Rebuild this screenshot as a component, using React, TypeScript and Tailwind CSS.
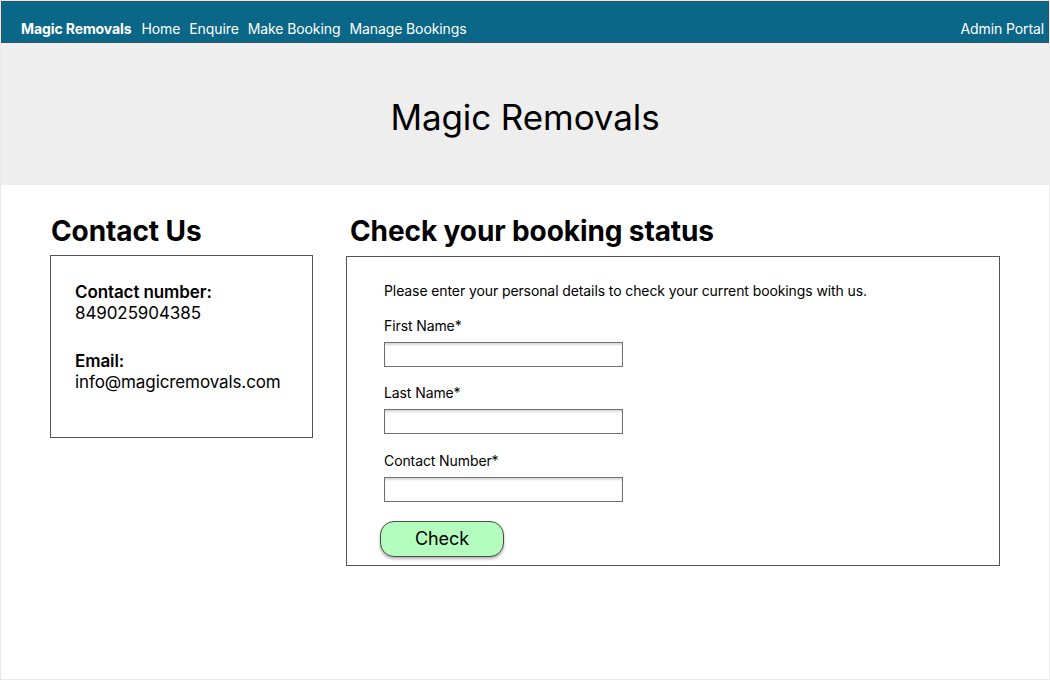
export default function App() {
  const navLinks = ["Home", "Enquire", "Make Booking", "Manage Bookings"];
  const fields = [
    { label: "First Name*", mt: "mt-[15px]" },
    { label: "Last Name*", mt: "mt-[16px]" },
    { label: "Contact Number*", mt: "mt-[17px]" },
  ];

  return (
    <div
      className="w-[1050px] h-[680px] overflow-hidden bg-white border border-[#e9e9e9] text-black tracking-[-0.1px]"
      style={{ fontFamily: "Inter, 'Noto Sans', sans-serif" }}
    >
      <nav className="h-[42px] bg-[#0a6787] border border-[#2f5566] flex items-end pb-[3px] pl-[19px] pr-[4px] text-white text-sm leading-5">
        <span className="font-bold">Magic Removals</span>
        <ul className="flex gap-[9px] ml-[10px]">
          {navLinks.map((l) => (
            <li key={l}>{l}</li>
          ))}
        </ul>
        <span className="ml-auto">Admin Portal</span>
      </nav>

      <header className="h-[142px] bg-[#eeeeee] flex items-center justify-center pt-[6px]">
        <h1 className="text-[35px] leading-[44px]">Magic Removals</h1>
      </header>

      <main className="flex items-start pt-[29px] pl-[49px]">
        <section className="w-[263px]">
          <h2 className="text-[28px] leading-[34px] font-bold pl-[1px] mb-[7px]">Contact Us</h2>
          <div className="h-[183px] border border-[#555] pl-[24px] pt-[26px] text-[17px] leading-[21px]">
            <p className="font-semibold">Contact number:</p>
            <p>849025904385</p>
            <p className="font-semibold mt-[27px]">Email:</p>
            <p>info@magicremovals.com</p>
          </div>
        </section>

        <section className="w-[654px] ml-[33px]">
          <h2 className="text-[28px] leading-[34px] font-bold pl-[4px] mb-[8px]">Check your booking status</h2>
          <form
            className="h-[310px] border border-[#555] pl-[37px] pt-[24px]"
            onSubmit={(e) => e.preventDefault()}
          >
            <p className="text-sm leading-5">
              Please enter your personal details to check your current bookings with us.
            </p>
            {fields.map((f) => (
              <div key={f.label} className={f.mt}>
                <label className="block text-sm leading-5">{f.label}</label>
                <input
                  type="text"
                  className="block mt-[6px] w-[239px] h-[25px] border border-[#707070] bg-white shadow-[inset_0_2px_2px_rgba(0,0,0,0.15)] outline-none"
                />
              </div>
            ))}
            <button
              type="submit"
              className="mt-[19px] -ml-[4px] w-[124px] h-[36px] rounded-[14px] bg-[#b3fdbe] border border-[#4a4a4a] shadow-[0_2px_3px_rgba(0,0,0,0.3)] text-[18px] leading-6"
            >
              Check
            </button>
          </form>
        </section>
      </main>
    </div>
  );
}
